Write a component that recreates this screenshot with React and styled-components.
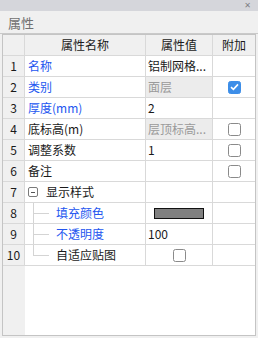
import React from 'react';
import styled, { createGlobalStyle } from 'styled-components';

const GlobalStyle = createGlobalStyle`
  html, body {
    margin: 0;
    padding: 0;
    background: #f0f0f0;
  }
  * {
    box-sizing: border-box;
  }
`;

const Panel = styled.div`
  width: 258px;
  height: 338px;
  display: flex;
  flex-direction: column;
  background: #f0f0f0;
  font-family: "Noto Sans CJK SC", "Noto Sans", sans-serif;
  font-size: 12px;
  color: #1a1a1a;
`;

const TopBar = styled.div`
  height: 11px;
  background: #d5d6db;
  display: flex;
  justify-content: flex-end;
  align-items: center;
  padding-right: 7px;
`;

const CloseGlyph = styled.span`
  font-family: "DejaVu Sans", sans-serif;
  font-size: 8px;
  font-weight: bold;
  line-height: 8px;
  color: #7e7f84;
`;

const TitleBar = styled.div`
  height: 23px;
  border-bottom: 1px solid #c9c9c9;
  padding-left: 8px;
  display: flex;
  align-items: center;
  font-size: 13px;
  color: #707070;
`;

const Body = styled.div`
  flex: 1;
  display: flex;
  padding: 0 2px 2px 2px;
`;

const Frame = styled.div`
  flex: 1;
  display: flex;
  flex-direction: column;
  border: 1px solid #c4c4c4;
  background: #ffffff;
`;

const Grid = styled.div`
  display: grid;
  grid-template-columns: 22px 121px 67px 1fr;
  grid-auto-rows: 21px;
  & > *:nth-child(-n + 4) {
    height: 22px;
  }
`;

const Row = styled.div`
  display: contents;
`;

const Cell = styled.div`
  border-right: ${(p) => (p.$last ? 'none' : '1px solid #d9d9d9')};
  border-bottom: 1px solid #d9d9d9;
  background: ${(p) => (p.$head || p.$num ? '#f0f0f0' : p.$readonly ? '#ececec' : '#ffffff')};
  color: ${(p) => (p.$readonly ? '#9a9a9a' : p.$blue ? '#2356f0' : '#1a1a1a')};
  display: flex;
  align-items: center;
  justify-content: ${(p) => (p.$center ? 'center' : 'flex-start')};
  padding: 0 ${(p) => (p.$center ? 0 : p.$pad ?? 3)}px;
  white-space: nowrap;
  overflow: hidden;
  line-height: 20px;
  font-size: 12px;
`;

const Expander = styled.span`
  width: 10px;
  height: 10px;
  border: 1px solid #7a7a7a;
  border-radius: 2px;
  margin-right: 8px;
  position: relative;
  flex-shrink: 0;
  &::after {
    content: '';
    position: absolute;
    left: 2px;
    right: 2px;
    top: 3.5px;
    height: 1px;
    background: #555;
  }
`;

const Elbow = styled.span`
  align-self: ${(p) => (p.$end ? 'flex-start' : 'stretch')};
  width: 16px;
  margin-left: 8px;
  margin-right: 7px;
  flex-shrink: 0;
  position: relative;
  border-left: 1px solid #d4d4d4;
  height: ${(p) => (p.$end ? '11px' : 'auto')};
  &::after {
    content: '';
    position: absolute;
    left: 0;
    right: 0;
    top: 10px;
    height: 1px;
    background: #d4d4d4;
  }
`;

const Check = styled.span`
  width: 13px;
  height: 13px;
  border-radius: 2.5px;
  border: 1px solid ${(p) => (p.$on ? '#3d8ee8' : '#8a8a8a')};
  background: ${(p) => (p.$on ? '#3d8ee8' : '#ffffff')};
  display: flex;
  align-items: center;
  justify-content: center;
`;

const Swatch = styled.span`
  width: 50px;
  height: 11px;
  border: 1px solid #111;
  background: #808080;
`;

const Filler = styled.div`
  flex: 1;
  display: flex;
`;

const Strip = styled.div`
  width: 22px;
  background: #f0f0f0;
`;

const CheckBox = ({ on }) => (
  <Check $on={on}>
    {on && (
      <svg width="9" height="8" viewBox="0 0 9 8">
        <path d="M1 4.2 L3.4 6.4 L8 1.4" fill="none" stroke="#fff" strokeWidth="1.6" />
      </svg>
    )}
  </Check>
);

const rows = [
  { name: '名称', blue: true, value: '铝制网格...' },
  { name: '类别', blue: true, value: '面层', readonly: true, add: 'on' },
  { name: '厚度(mm)', blue: true, value: '2' },
  { name: '底标高(m)', value: '层顶标高...', readonly: true, add: 'off' },
  { name: '调整系数', value: '1', add: 'off' },
  { name: '备注', value: '', add: 'off' },
  { name: '显示样式', group: true, value: '' },
  { name: '填充颜色', blue: true, child: true, swatch: true },
  { name: '不透明度', blue: true, child: true, value: '100' },
  { name: '自适应贴图', child: true, end: true, valueCheck: true },
];

export default function App() {
  return (
    <>
      <GlobalStyle />
      <Panel>
        <TopBar>
          <CloseGlyph>✕</CloseGlyph>
        </TopBar>
        <TitleBar>属性</TitleBar>
        <Body>
          <Frame>
            <Grid>
              <Row>
                <Cell $head />
                <Cell $head $center>属性名称</Cell>
                <Cell $head $center>属性值</Cell>
                <Cell $head $center $last>附加</Cell>
              </Row>
              {rows.map((r, i) => (
                <Row key={i}>
                  <Cell $num $center>{i + 1}</Cell>
                  <Cell $blue={r.blue} $pad={r.child ? 0 : 3}>
                    {r.group && <Expander />}
                    {r.child && <Elbow $end={r.end} />}
                    {r.name}
                  </Cell>
                  <Cell
                    $readonly={r.readonly}
                    $center={r.swatch || r.valueCheck}
                    $pad={2}
                  >
                    {r.swatch && <Swatch />}
                    {r.valueCheck && <CheckBox />}
                    {!r.swatch && !r.valueCheck && r.value}
                  </Cell>
                  <Cell $center $last>
                    {r.add && <CheckBox on={r.add === 'on'} />}
                  </Cell>
                </Row>
              ))}
            </Grid>
            <Filler>
              <Strip />
            </Filler>
          </Frame>
        </Body>
      </Panel>
    </>
  );
}
